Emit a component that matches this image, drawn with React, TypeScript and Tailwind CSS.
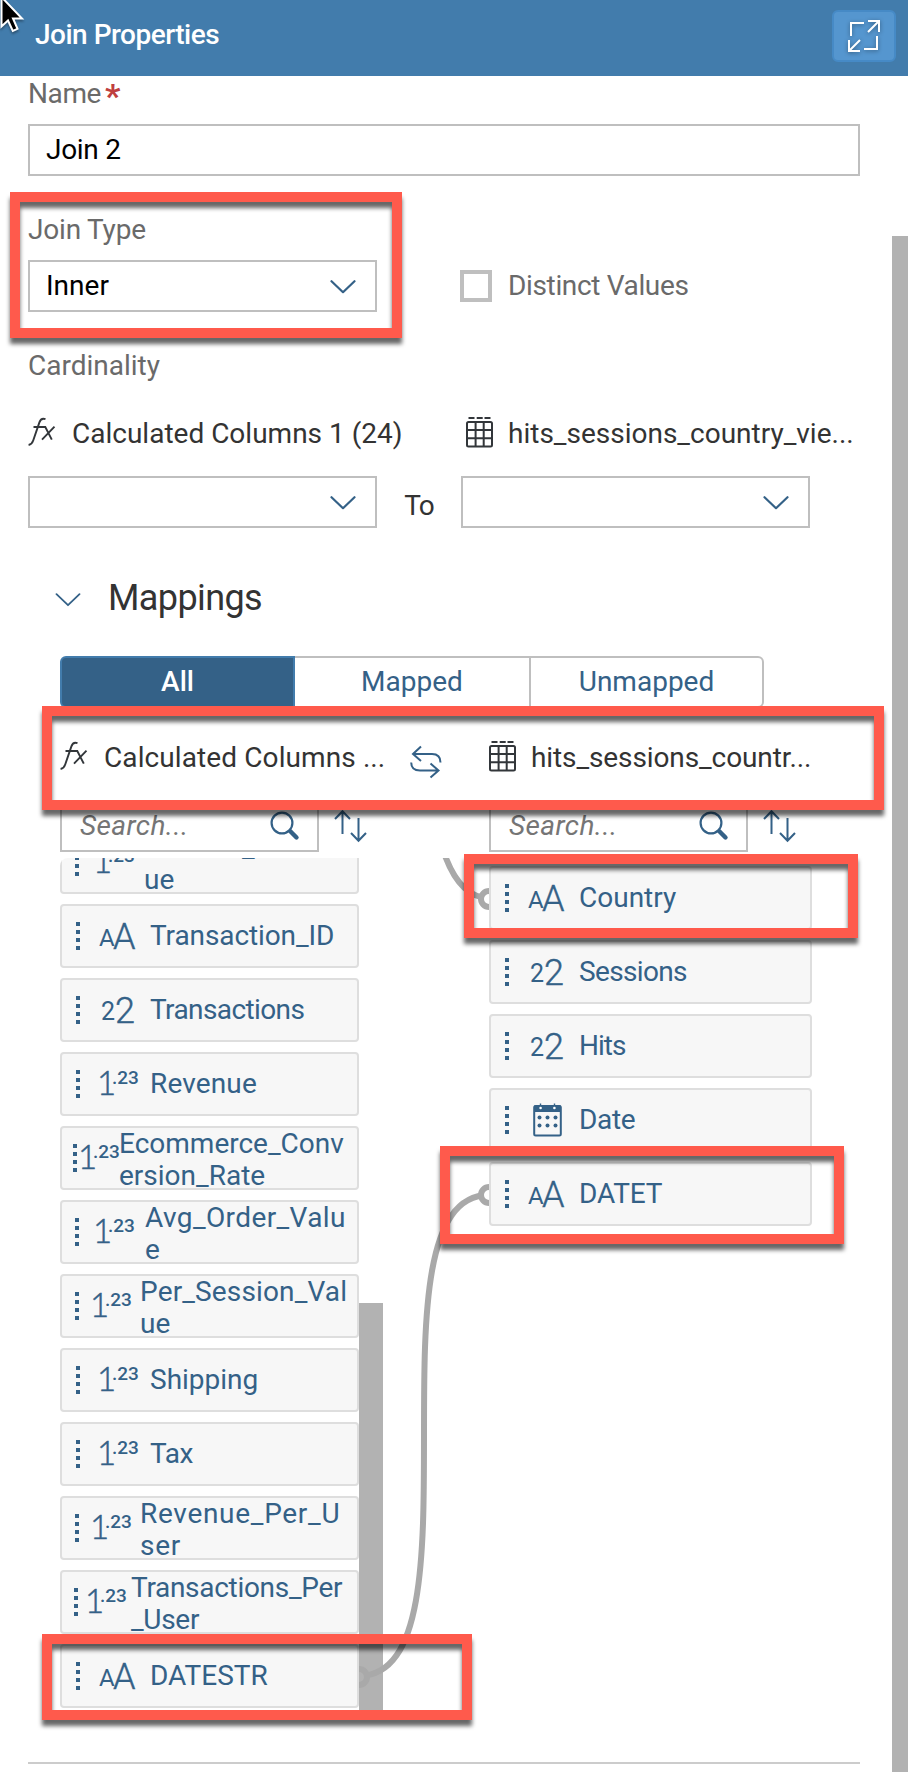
import type { ReactNode } from "react";

type Kind = "text" | "integer" | "decimal" | "date";

interface Field {
  lines: string[];
  kind: Kind;
  grip?: string;
  icon?: string;
  label?: string;
  tracking?: string;
}

const leftFields: Field[] = [
  { lines: ["Product_Reven", "ue"], kind: "decimal", grip: "ml-[13px]", icon: "ml-[16px]", label: "ml-[9px] pt-[4px]" },
  { lines: ["Transaction_ID"], kind: "text", tracking: "tracking-[-0.1px]" },
  { lines: ["Transactions"], kind: "integer", tracking: "tracking-[-0.6px]" },
  { lines: ["Revenue"], kind: "decimal", tracking: "tracking-[0.15px]" },
  { lines: ["Ecommerce_Conv", "ersion_Rate"], kind: "decimal", grip: "ml-[11px]", icon: "ml-[3px]", label: "-ml-px pt-[3px]" },
  { lines: ["Avg_Order_Valu", "e"], kind: "decimal", grip: "ml-[13px]", icon: "ml-[16px]", label: "ml-[10px] pt-[3px]", tracking: "tracking-[0.4px]" },
  { lines: ["Per_Session_Val", "ue"], kind: "decimal", grip: "ml-[13px]", icon: "ml-[13px]", label: "ml-[8px] pt-[3px]", tracking: "tracking-[0.15px]" },
  { lines: ["Shipping"], kind: "decimal" },
  { lines: ["Tax"], kind: "decimal", tracking: "tracking-[-0.5px]" },
  { lines: ["Revenue_Per_U", "ser"], kind: "decimal", grip: "ml-[13px]", icon: "ml-[13px]", label: "ml-[8px] pt-[3px]", tracking: "tracking-[0.7px]" },
  { lines: ["Transactions_Per", "_User"], kind: "decimal", grip: "ml-[12px]", icon: "ml-[9px]", label: "ml-[4px] pt-[3px]", tracking: "tracking-[-0.3px]" },
  { lines: ["DATESTR"], kind: "text" },
];

const rightFields: Field[] = [
  { lines: ["Country"], kind: "text" },
  { lines: ["Sessions"], kind: "integer", tracking: "tracking-[-0.65px]" },
  { lines: ["Hits"], kind: "integer", tracking: "tracking-[-1px]" },
  { lines: ["Date"], kind: "date", tracking: "tracking-[-0.3px]" },
  { lines: ["DATET"], kind: "text", tracking: "tracking-[-0.2px]" },
];

function Chevron({ thin = false }: { thin?: boolean }) {
  return (
    <svg className="translate-y-px" width="26" height="14" viewBox="0 0 26 14" fill="none" stroke="#346187" strokeWidth={thin ? 1.8 : 2.2} strokeLinecap="round" strokeLinejoin="round">
      <path d="M1.5 1.2 L13 12.2 L24.5 1.2" />
    </svg>
  );
}

function FxIcon() {
  return (
    <svg className="shrink-0" width="28" height="30" viewBox="0 0 28 30" fill="none" stroke="#32363a" strokeWidth="1.9">
      <path d="M17.5 2.2 C14.5 1.2 12.4 2.4 11.4 5.4 L5.2 23.5 C4.3 26.2 2.8 27.6 0.6 28" />
      <path d="M5.5 10 H17.3 L23.8 22.6 M26.5 9.6 L14 22.6" />
    </svg>
  );
}

function TableIcon() {
  return (
    <svg className="shrink-0" width="28" height="31" viewBox="0 0 28 31" fill="none" stroke="#32363a" strokeWidth="2">
      <path d="M2.5 1 H8.5 M10.7 1 H16.7 M18.5 1 H24.5" />
      <rect x="1" y="5" width="25" height="24.5" rx="1.5" />
      <path d="M9.6 5 V29 M17.7 5 V29 M1 13 H26 M1 21.2 H26" />
    </svg>
  );
}

function SwapIcon() {
  return (
    <svg width="32" height="34" viewBox="0 0 32 34" fill="none" stroke="#346187" strokeWidth="2">
      <path d="M11 1.5 L3 9 L11 16 M3 9 H22 C27.5 9 30.5 12 30.5 17.5" />
      <path d="M20.5 18.5 L28.5 25.5 L20.5 32.5 M28.5 25.5 H10 C4.5 25.5 1.2 23 1.2 17.5" />
    </svg>
  );
}

function SearchIcon() {
  return (
    <svg width="30" height="30" viewBox="0 0 30 30" fill="none" stroke="#346187" strokeLinecap="round">
      <circle cx="12" cy="12" r="10.4" strokeWidth="2.2" />
      <path d="M20.3 20.3 L26.5 26.5" strokeWidth="4.4" />
    </svg>
  );
}

function SortIcon() {
  return (
    <svg width="34" height="34" viewBox="0 0 34 34" fill="none" stroke="#346187" strokeWidth="2">
      <path d="M8.5 25 V2.5 M1 10 L8.5 2.2 L16 10" />
      <path d="M24.5 9 V31.5 M17 24 L24.5 31.8 L32 24" />
    </svg>
  );
}

function CalendarIcon() {
  return (
    <svg width="30" height="34" viewBox="0 0 30 34" fill="none">
      <rect x="1.2" y="3" width="26.6" height="29.4" rx="1.5" stroke="#346187" strokeWidth="2" />
      <path d="M1 2.5 H28 V9 H1 Z M6.8 0.5 H8.2 V4 H6.8 Z M20.8 0.5 H22.2 V4 H20.8 Z" fill="#346187" />
      <circle cx="7.6" cy="5" r="1.3" fill="#fff" />
      <circle cx="21.4" cy="5" r="1.3" fill="#fff" />
      {[14.5, 22.5].map((y) =>
        [6.5, 14.5, 22.5].map((x) => <circle key={`${x}-${y}`} cx={x} cy={y} r="2" fill="#346187" />)
      )}
    </svg>
  );
}

function KindIcon({ kind }: { kind: Kind }) {
  if (kind === "date") return <CalendarIcon />;
  if (kind === "text")
    return (
      <span className="flex translate-y-[3px] items-baseline leading-[40px]">
        <span className="-ml-[2px] w-[14px] -translate-y-[3px] text-[24px] font-normal">A</span>
        <span className="text-[36px] font-light [-webkit-text-stroke:0.4px_#346187]">A</span>
      </span>
    );
  if (kind === "integer")
    return (
      <span className="flex translate-y-[3px] items-baseline leading-[40px]">
        <span className="w-[14px] -translate-y-[3px] text-[25px] font-normal">2</span>
        <span className="text-[36px] font-light [-webkit-text-stroke:0.4px_#346187]">2</span>
      </span>
    );
  return (
    <span className="flex translate-y-px items-baseline leading-[40px]">
      <span className="-ml-[2px] w-[13px] font-[Lato] text-[33px] font-light [-webkit-text-stroke:0.5px_#346187]">1</span>
      <span className="-translate-y-[11px] pl-[2px] text-[19px] font-medium">.23</span>
    </span>
  );
}

function FieldCard({ field }: { field: Field }) {
  return (
    <div className="flex h-16 shrink-0 items-center rounded border-2 border-[#dedede] bg-[#f7f7f7] text-[#346187]">
      <span className={`flex shrink-0 flex-col gap-1 ${field.grip ?? "ml-[14px]"}`}>
        <i className="size-1 bg-[#346187]" />
        <i className="size-1 bg-[#346187]" />
        <i className="size-1 bg-[#346187]" />
        <i className="size-1 bg-[#346187]" />
      </span>
      <span className={`flex w-10 shrink-0 items-center ${field.icon ?? (field.kind === "date" ? "ml-[24px]" : field.kind === "decimal" ? "ml-[19px]" : "ml-[21px]")}`}>
        <KindIcon kind={field.kind} />
      </span>
      <span className={`text-[28px] leading-8 whitespace-nowrap ${field.tracking ?? ""} ${field.label ?? (field.kind === "date" ? "ml-[6px]" : field.kind === "decimal" ? "ml-[11px]" : "ml-[9px]")}`}>
        {field.lines.map((line) => (
          <span key={line} className="block">{line}</span>
        ))}
      </span>
    </div>
  );
}

function Select({ value = "" }: { value?: string }) {
  return (
    <div className="flex h-[52px] w-[349px] shrink-0 items-center justify-between border-2 border-[#bfbfbf] bg-white pr-[19px] pl-4 text-black">
      <span>{value}</span>
      <Chevron />
    </div>
  );
}

function SearchBar() {
  return (
    <div className="flex h-[52px]">
      <div className="flex w-[259px] items-center justify-between border-2 border-[#bfbfbf] pr-[17px] pl-[18px]">
        <span className="pb-px tracking-[0.4px] text-[#757575] italic">Search...</span>
        <SearchIcon />
      </div>
      <span className="mt-[9px] ml-[15px]"><SortIcon /></span>
    </div>
  );
}

function Callout({ place }: { place: string }) {
  return <div className={`absolute border-[10px] border-[#ff5a4c] drop-shadow-[0_6px_2px_rgba(0,0,0,0.6)] ${place}`} />;
}

function Tab({ children, look }: { children: ReactNode; look: string }) {
  return <div className={`flex h-[52px] items-center justify-center border-2 ${look}`}>{children}</div>;
}

export default function App() {
  return (
    <div className="relative flex h-[1772px] w-[908px] flex-col overflow-hidden bg-white font-[Roboto,sans-serif] text-[28px] leading-8 text-[#333333]">
      <header className="flex h-[76px] shrink-0 items-start justify-between bg-[#427cac] pr-3 pl-[35px] text-white">
        <h1 className="pt-[19px] font-medium tracking-[-0.5px]">Join Properties</h1>
        <button className="mt-[10px] flex h-[52px] w-16 items-center justify-center rounded-md border-2 border-[#468ac6] bg-[#5596cf]">
          <svg className="drop-shadow-[0_1px_2px_rgba(0,0,0,0.4)]" width="34" height="34" viewBox="0 0 34 34" fill="none" stroke="#fff" strokeWidth="2">
            <path d="M4 17 V4 H17 M30 17 V30 H17" />
            <path d="M21 2 H32 V13 M32 2 L21 13 M2 21 V32 H13 M2 32 L13 21" />
          </svg>
        </button>
      </header>

      <div className="flex flex-1">
        <main className="flex w-[892px] flex-col pl-7">
          <div className="flex h-12 pt-[2px] text-[#6a6a6a]">
            <span className="tracking-[-0.4px]">Name</span>
            <span className="ml-1 text-[34px] leading-9 font-bold text-[#bf3f3f]">*</span>
          </div>
          <div className="flex h-[52px] w-[832px] items-center border-2 border-[#bfbfbf] pl-4 tracking-[-0.3px] text-black">Join 2</div>

          <div className="h-[84px] pt-[38px] tracking-[-0.2px] text-[#6a6a6a]">Join Type</div>
          <div className="flex items-center">
            <Select value="Inner" />
            <span className="ml-[83px] size-8 border-4 border-[#bfbfbf]" />
            <span className="ml-4 tracking-[-0.35px] text-[#6a6a6a]">Distinct Values</span>
          </div>

          <div className="h-[105px] pt-[38px] text-[#6a6a6a]">Cardinality</div>
          <div className="flex h-[59px] items-start">
            <div className="flex w-[438px] items-start gap-4">
              <FxIcon />
              <span className="pt-px">Calculated Columns 1 (24)</span>
            </div>
            <div className="flex items-start gap-[14px]">
              <TableIcon />
              <span className="pt-px">hits_sessions_country_vie...</span>
            </div>
          </div>
          <div className="flex items-center">
            <Select />
            <span className="w-[84px] pt-2 text-center tracking-[-1px]">To</span>
            <Select />
          </div>

          <section className="flex flex-1 flex-col">
            <div className="flex h-32 items-start pt-[50px] pl-[27px] text-[36px] leading-10">
              <span className="mt-[14px] flex w-[53px] items-center"><Chevron thin /></span>
              <h2 className="tracking-[-0.6px]">Mappings</h2>
            </div>
            <div className="ml-8 flex text-[#346187]">
              <Tab look="w-[235px] rounded-l-md border-[#427cac] bg-[#346187] font-medium text-white">All</Tab>
              <Tab look="w-[234px] border-x-0 border-[#bfbfbf]">Mapped</Tab>
              <Tab look="w-[235px] rounded-r-md border-[#bfbfbf]">Unmapped</Tab>
            </div>

            <div className="ml-8 flex h-[92px] items-start pt-[33px]">
              <FxIcon />
              <span className="ml-4 w-[306px] pt-px tracking-[0.1px]">Calculated Columns ...</span>
              <span className="mt-1"><SwapIcon /></span>
              <span className="ml-[47px]"><TableIcon /></span>
              <span className="ml-[14px] pt-px tracking-[-0.1px]">hits_sessions_countr...</span>
            </div>

            <div className="ml-8 flex">
              <div className="w-[429px]"><SearchBar /></div>
              <SearchBar />
            </div>

            <div className="relative mt-[6px] ml-8 flex h-[854px] overflow-hidden rounded-tl-lg">
              <div className="-mt-7 flex w-[299px] shrink-0 flex-col gap-[10px]">
                {leftFields.map((f) => <FieldCard key={f.lines[0]} field={f} />)}
              </div>
              <div className="mt-[445px] w-6 shrink-0 bg-[#b2b2b2]" />
              <div className="mt-2 ml-[106px] flex w-[323px] shrink-0 flex-col gap-[10px]">
                {rightFields.map((f) => <FieldCard key={f.lines[0]} field={f} />)}
              </div>
              <svg className="pointer-events-none absolute top-0 left-[299px]" width="130" height="854" viewBox="0 0 130 854" fill="none" stroke="#a9a9a9" strokeWidth="6">
                <path d="M84 -8 C94 22 108 40 130 40" />
                <path d="M130 337 C0 337 130 818 0 818" />
                <circle cx="130" cy="41" r="8" fill="#fff" />
                <circle cx="130" cy="337" r="8" fill="#fff" />
                <circle cx="0" cy="819" r="8" fill="#b2b2b2" />
              </svg>
            </div>
            <div className="mt-[50px] h-[2px] w-[832px] bg-[#cccccc]" />
          </section>
        </main>
        <div className="mt-40 w-4 bg-[#b2b2b2]" />
      </div>

      <Callout place="left-[10px] top-[192px] h-[146px] w-[392px]" />
      <Callout place="left-[42px] top-[706px] h-[104px] w-[842px]" />
      <Callout place="left-[464px] top-[854px] h-[84px] w-[394px]" />
      <Callout place="left-[440px] top-[1146px] h-[98px] w-[404px]" />
      <Callout place="left-[42px] top-[1634px] h-[86px] w-[430px]" />

      <svg className="absolute top-0 left-0 drop-shadow-[0_2px_1px_rgba(0,0,0,0.35)]" width="26" height="36" viewBox="0 0 26 36">
        <path d="M1.5 -3 V26.5 L8 20.5 L12.8 31 L17.5 28.8 L13 18.5 H22 Z" fill="#000" stroke="#fff" strokeWidth="2" />
      </svg>
    </div>
  );
}
